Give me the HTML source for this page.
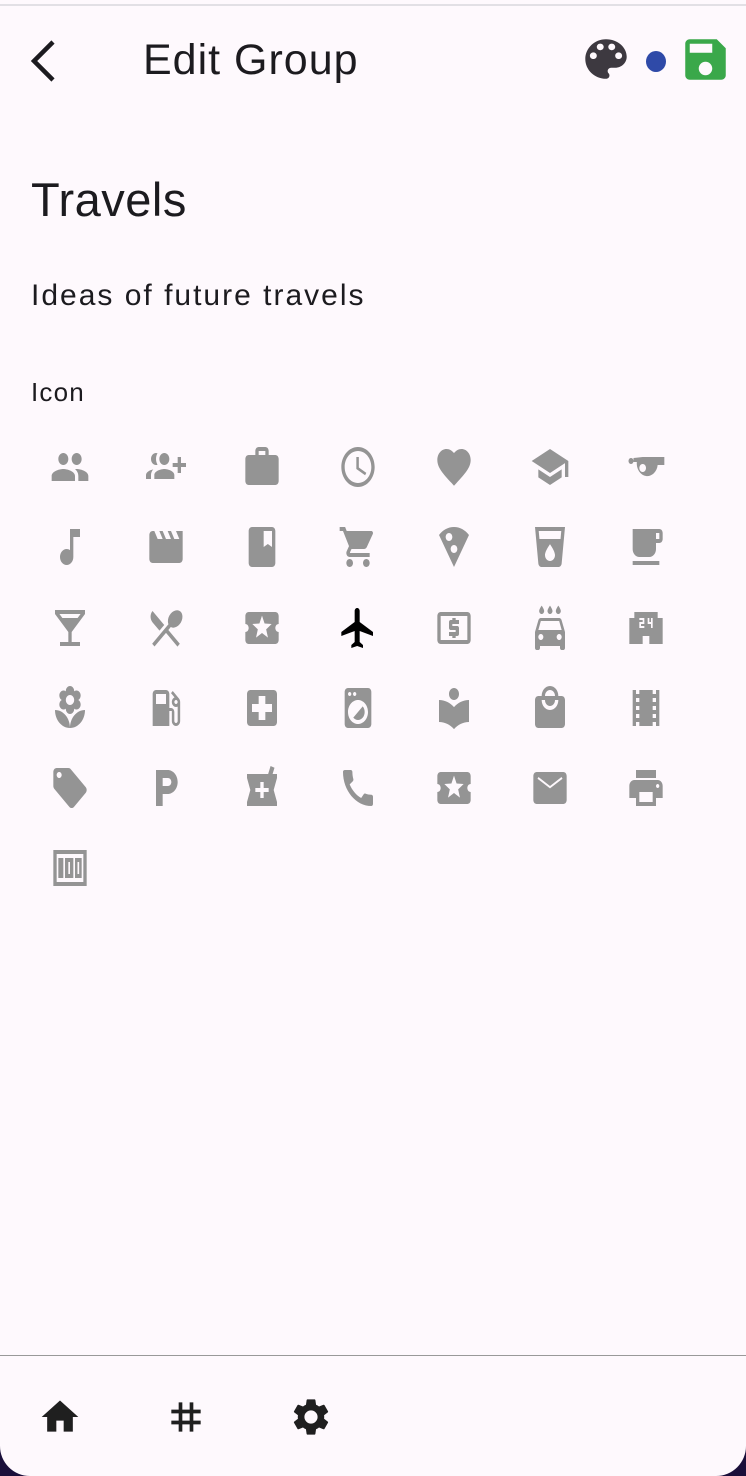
<!DOCTYPE html>
<html><head><meta charset="utf-8"><style>
*{margin:0;padding:0;box-sizing:border-box}
html,body{width:746px;height:1476px;background:#1a0f3a;overflow:hidden}
.scr{position:absolute;left:0;top:0;width:746px;height:1476px;background:#fef9fd;border-radius:0 0 30px 30px;overflow:hidden;font-family:"Liberation Sans",sans-serif;color:#1c1b1f}
.topline{position:absolute;left:0;top:4px;width:746px;height:2px;background:#e2e0e5}
.t{position:absolute;white-space:nowrap}
.g{position:absolute;width:40px;height:48px;fill:#949494}
.nav{position:absolute;fill:#1f1f1f}
</style></head><body><div class="scr">
<div class="topline"></div>
<svg style="position:absolute;left:26px;top:40px" width="34" height="42" viewBox="0 0 34 42"><path d="M27 2L8 21l19 19" fill="none" stroke="#1c1b1f" stroke-width="4.5"/></svg>
<div class="t" style="left:143px;top:36px;font-size:43px;letter-spacing:1px">Edit Group</div>
<svg style="position:absolute;left:583px;top:37px" width="46" height="44" viewBox="2 2 20 20" preserveAspectRatio="none"><path fill="#3d3940" d="M12 3c-4.97 0-9 4.03-9 9s4.03 9 9 9c.83 0 1.5-.67 1.5-1.5 0-.39-.15-.74-.39-1.01-.23-.26-.38-.61-.38-.99 0-.83.67-1.5 1.5-1.5H16c2.76 0 5-2.24 5-5 0-4.42-4.03-8-9-8zm-5.5 9c-.83 0-1.5-.67-1.5-1.5S5.670 9 6.5 9 8 9.67 8 10.5 7.33 12 6.5 12zm3-4C8.67 8 8 7.33 8 6.5S8.67 5 9.5 5s1.5.67 1.5 1.5S10.33 8 9.5 8zm5 0c-.83 0-1.5-.67-1.5-1.5S13.67 5 14.5 5s1.5.67 1.5 1.5S15.33 8 14.5 8zm3 4c-.83 0-1.5-.67-1.5-1.5S16.67 9 17.5 9s1.5.67 1.5 1.5-.67 1.5-1.5 1.5z"/></svg>
<div style="position:absolute;left:646px;top:51px;width:20px;height:21px;border-radius:50%;background:#2f4aa8"></div>
<svg style="position:absolute;left:683px;top:37px" width="45" height="45" viewBox="2 2 20 20"><path fill="#3aa84a" d="M17 3H5c-1.11 0-2 .9-2 2v14c0 1.1.89 2 2 2h14c1.1 0 2-.9 2-2V7l-4-4zm-5 16c-1.66 0-3-1.340-3-3s1.34-3 3-3 3 1.34 3 3-1.34 3-3 3zm3-10H5V5h10v4z"/></svg>

<div class="t" style="left:31px;top:172px;font-size:47px;letter-spacing:0.5px">Travels</div>
<div class="t" style="left:31px;top:279px;font-size:30px;letter-spacing:2px">Ideas of future travels</div>
<div class="t" style="left:31px;top:377px;font-size:26px;letter-spacing:1.2px">Icon</div>

<!-- row1 y=443 -->
<svg class="g" style="left:50px;top:443px" viewBox="0 0 24 24" preserveAspectRatio="none"><path d="M16 11c1.66 0 2.99-1.34 2.99-3S17.66 5 16 5c-1.66 0-3 1.34-3 3s1.34 3 3 3zm-8 0c1.66 0 2.99-1.34 2.99-3S9.66 5 8 5C6.34 5 5 6.34 5 8s1.34 3 3 3zm0 2c-2.33 0-7 1.17-7 3.5V19h14v-2.5c0-2.33-4.67-3.5-7-3.5zm8 0c-.29 0-.62.02-.97.05 1.16.84 1.97 1.970 1.97 3.45V19h6v-2.5c0-2.33-4.67-3.5-7-3.5z"/></svg>
<svg class="g" style="left:146px;top:443px" viewBox="0 0 24 24" preserveAspectRatio="none"><g transform="translate(24 0) scale(-1 1)"><path d="M8 10H5V7H3v3H0v2h3v3h2v-3h3v-2zm10 1c1.66 0 2.99-1.34 2.99-3S19.66 5 18 5c-.32 0-.63.05-.91.14.57.81.9 1.790.9 2.86s-.34 2.04-.9 2.86c.28.09.59.14.91.14zm-5 0c1.66 0 2.99-1.34 2.99-3S14.66 5 13 5c-1.66 0-3 1.34-3 3s1.34 3 3 3zm6.62 2.16c.83.73 1.38 1.66 1.38 2.84v2h3v-2c0-1.54-2.37-2.49-4.38-2.84zM13 13c-2 0-6 1-6 3v2h12v-2c0-2-4-3-6-3z"/></g></svg>
<svg class="g" style="left:242px;top:443px" viewBox="0 0 24 24" preserveAspectRatio="none"><path d="M20 6h-4V4c0-1.11-.89-2-2-2h-4c-1.11 0-2 .89-2 2v2H4c-1.11 0-1.99.89-1.99 2L2 19c0 1.11.89 2 2 2h16c1.11 0 2-.89 2-2V8c0-1.11-.89-2-2-2zm-6 0h-4V4h4v2z"/></svg>
<svg class="g" style="left:338px;top:443px" viewBox="0 0 24 24" preserveAspectRatio="none"><path d="M11.99 2C6.47 2 2 6.48 2 12s4.47 10 9.99 10C17.52 22 22 17.52 22 12S17.52 2 11.99 2zM12 20c-4.42 0-8-3.58-8-8s3.58-8 8-8 8 3.58 8 8-3.58 8-8 8zm.5-13H11v6l5.25 3.15.75-1.23-4.5-2.67z"/></svg>
<svg class="g" style="left:434px;top:443px" viewBox="0 0 24 24" preserveAspectRatio="none"><path d="M12 21.35l-1.45-1.32C5.4 15.36 2 12.28 2 8.5 2 5.42 4.42 3 7.5 3c1.74 0 3.41.81 4.5 2.09C13.09 3.81 14.76 3 16.5 3 19.58 3 22 5.42 22 8.5c0 3.78-3.4 6.86-8.55 11.54L12 21.35z"/></svg>
<svg class="g" style="left:530px;top:443px" viewBox="0 0 24 24" preserveAspectRatio="none"><path d="M5 13.18v4L12 21l7-3.82v-4L12 17l-7-3.82zM12 3L1 9l11 6 9-4.91V17h2V9L12 3z"/></svg>
<svg class="g" style="left:626px;top:443px" viewBox="0 0 24 24" preserveAspectRatio="none"><path fill-rule="evenodd" d="M3 7.5a1.5 1.5 0 1 0 0.01 0zM10 7h13v4h-4a6 6 0 1 1-12.5-1.5L4.5 9.5 4.5 7.5zM10 10.5a2 2 0 1 0 0.01 0z"/></svg>
<!-- row2 y=523 -->
<svg class="g" style="left:50px;top:523px" viewBox="0 0 24 24" preserveAspectRatio="none"><path d="M12 3v10.55c-.59-.34-1.27-.55-2-.55-2.21 0-4 1.79-4 4s1.79 4 4 4 4-1.79 4-4V7h4V3h-6z"/></svg>
<svg class="g" style="left:146px;top:523px" viewBox="0 0 24 24" preserveAspectRatio="none"><path d="M18 4l2 4h-3l-2-4h-2l2 4h-3l-2-4H8l2 4H7L5 4H4c-1.1 0-1.99.9-1.99 2L2 18c0 1.1.9 2 2 2h16c1.1 0 2-.9 2-2V4h-4z"/></svg>
<svg class="g" style="left:242px;top:523px" viewBox="0 0 24 24" preserveAspectRatio="none"><path d="M18 2H6c-1.1 0-2 .9-2 2v16c0 1.1.9 2 2 2h12c1.1 0 2-.9 2-2V4c0-1.1-.9-2-2-2zM6 4h5v8l-2.5-1.5L6 12V4z" transform="translate(24 0) scale(-1 1)"/></svg>
<svg class="g" style="left:338px;top:523px" viewBox="0 0 24 24" preserveAspectRatio="none"><path d="M7 18c-1.1 0-1.99.9-1.99 2S5.9 22 7 22s2-.9 2-2-.9-2-2-2zM1 2v2h2l3.6 7.59-1.35 2.45c-.16.28-.25.61-.25.96 0 1.1.9 2 2 2h12v-2H7.42c-.14 0-.25-.11-.25-.25l.03-.12.9-1.63h7.45c.75 0 1.41-.41 1.75-1.03l3.58-6.49c.08-.14.12-.31.12-.48 0-.55-.45-1-1-1H5.21l-.94-2H1zm16 16c-1.1 0-1.99.9-1.99 2s.89 2 1.99 2 2-.9 2-2-.9-2-2-2z"/></svg>
<svg class="g" style="left:434px;top:523px" viewBox="0 0 24 24" preserveAspectRatio="none"><path d="M12 2C8.43 2 5.23 3.54 3.01 6L12 22l8.99-16C18.78 3.55 15.57 2 12 2zM7 7c0-1.1.9-2 2-2s2 .9 2 2-.9 2-2 2-2-.9-2-2zm5 8c-1.1 0-2-.9-2-2s.9-2 2-2 2 .9 2 2-.9 2-2 2z"/></svg>
<svg class="g" style="left:530px;top:523px" viewBox="0 0 24 24" preserveAspectRatio="none"><path d="M3 2l2.01 18.23C5.13 21.23 5.97 22 7 22h10c1.03 0 1.87-.77 1.99-1.77L21 2H3zm9 17c-1.66 0-3-1.34-3-3 0-2 3-5.4 3-5.4s3 3.4 3 5.4c0 1.66-1.34 3-3 3zm6.33-11H5.67l-.44-4h13.53l-.43 4z"/></svg>
<svg class="g" style="left:626px;top:523px" viewBox="0 0 24 24" preserveAspectRatio="none"><path d="M20 3H4v10c0 2.21 1.79 4 4 4h6c2.21 0 4-1.79 4-4v-3h2c1.11 0 2-.89 2-2V5c0-1.11-.89-2-2-2zm0 5h-2V5h2v3zM4 19h16v2H4z"/></svg>
<!-- row3 y=604 -->
<svg class="g" style="left:50px;top:604px" viewBox="0 0 24 24" preserveAspectRatio="none"><path d="M21 5V3H3v2l8 9v5H6v2h12v-2h-5v-5l8-9zM7.43 7L5.66 5h12.69l-1.78 2H7.43z"/></svg>
<svg class="g" style="left:146px;top:604px" viewBox="0 0 24 24" preserveAspectRatio="none"><path d="M8.1 13.34l2.83-2.83L3.91 3.5c-1.56 1.56-1.56 4.09 0 5.66l4.19 4.18zm6.78-1.81c1.53.71 3.68.21 5.27-1.38 1.91-1.910 2.28-4.65.81-6.12-1.46-1.46-4.2-1.1-6.12.81-1.59 1.59-2.09 3.74-1.38 5.27L3.7 19.87l1.41 1.41L12 14.41l6.88 6.88 1.41-1.41L13.41 13l1.47-1.47z"/></svg>
<svg class="g" style="left:242px;top:604px" viewBox="0 0 24 24" preserveAspectRatio="none"><path d="M20 12c0-1.1.9-2 2-2V6c0-1.1-.9-2-2-2H4c-1.1 0-1.99.9-1.99 2v4c1.1 0 1.99.9 1.99 2s-.89 2-2 2v4c0 1.1.9 2 2 2h16c1.1 0 2-.9 2-2v-4c-1.1 0-2-.9-2-2zm-4.42 4.8L12 14.5l-3.58 2.3 1.08-4.12-3.29-2.69 4.24-.25L12 5.8l1.54 3.95 4.24.25-3.29 2.69 1.09 4.11z"/></svg>
<svg class="g" style="left:338px;top:604px;fill:#000" viewBox="0 0 24 24" preserveAspectRatio="none"><path d="M21 16v-2l-8-5V3.5c0-.83-.67-1.5-1.5-1.5S10 2.67 10 3.5V9l-8 5v2l8-2.5V19l-2 1.5V22l3.5-1 3.5 1v-1.5L13 19v-5.5l8 2.5z"/></svg>
<svg class="g" style="left:434px;top:604px" viewBox="0 0 24 24" preserveAspectRatio="none"><path d="M11 17h2v-1h1c.55 0 1-.45 1-1v-3c0-.55-.45-1-1-1h-3v-1h4V8h-2V7h-2v1h-1c-.55 0-1 .45-1 1v3c0 .55.45 1 1 1h3v1H9v2h2v1zm9-13H4c-1.11 0-1.99.89-1.99 2L2 18c0 1.11.89 2 2 2h16c1.11 0 2-.89 2-2V6c0-1.11-.89-2-2-2zm0 14H4V6h16v12z"/></svg>
<svg class="g" style="left:530px;top:604px" viewBox="0 0 24 24" preserveAspectRatio="none"><path d="M17 5c.83 0 1.5-.67 1.5-1.5 0-1-1.5-2.7-1.5-2.7s-1.5 1.7-1.5 2.7c0 .83.67 1.5 1.5 1.5zm-5 0c.83 0 1.5-.67 1.5-1.5 0-1-1.5-2.7-1.5-2.7s-1.5 1.7-1.5 2.7c0 .83.67 1.5 1.5 1.5zM7 5c.83 0 1.5-.67 1.5-1.5C8.5 2.5 7 .8 7 .8S5.5 2.5 5.5 3.5C5.5 4.33 6.17 5 7 5zm11.92 3.01C18.72 7.42 18.160 7 17.5 7h-11c-.66 0-1.21.42-1.42 1.01L3 14v8c0 .55.45 1 1 1h1c.55 0 1-.45 1-1v-1h12v1c0 .55.45 1 1 1h1c.55 0 1-.45 1-1v-8l-2.08-5.99zM6.5 18c-.83 0-1.5-.67-1.5-1.5S5.67 15 6.5 15s1.5.67 1.5 1.5S7.33 18 6.5 18zm11 0c-.83 0-1.5-.67-1.5-1.5s.67-1.5 1.5-1.5 1.5.67 1.5 1.5-.67 1.5-1.5 1.5zM5 13l1.5-4.5h11L19 13H5z"/></svg>
<svg class="g" style="left:626px;top:604px" viewBox="0 0 24 24" preserveAspectRatio="none"><path d="M19 7V4H5v3H2v13h8v-4h4v4h8V7h-3zm-8 3H9v1h2v1H8V9h2V8H8V7h3v3zm5 2h-1v-2h-2V7h1v2h1V7h1v5z"/></svg>
<!-- row4 y=684 -->
<svg class="g" style="left:50px;top:684px" viewBox="0 0 24 24" preserveAspectRatio="none"><path d="M12 22c4.97 0 9-4.03 9-9-4.97 0-9 4.03-9 9zM5.6 10.25c0 1.38 1.12 2.5 2.5 2.5.53 0 1.01-.16 1.42-.44l-.02.19c0 1.38 1.12 2.5 2.5 2.5s2.5-1.12 2.5-2.5l-.02-.19c.4.28.89.44 1.42.44 1.38 0 2.5-1.12 2.5-2.5 0-1-.59-1.85-1.43-2.25.84-.4 1.43-1.25 1.43-2.25 0-1.38-1.12-2.5-2.5-2.5-.53 0-1.01.16-1.42.44l.02-.19C14.5 2.12 13.38 1 12 1S9.5 2.12 9.5 3.5l.02.19c-.4-.28-.89-.44-1.42-.44-1.38 0-2.5 1.12-2.5 2.5 0 1 .59 1.85 1.43 2.25-.84.4-1.43 1.25-1.43 2.25zM12 5.5c1.38 0 2.5 1.12 2.5 2.5s-1.12 2.5-2.5 2.5S9.5 9.38 9.5 8s1.12-2.5 2.5-2.5zM3 13c0 4.97 4.03 9 9 9 0-4.97-4.03-9-9-9z"/></svg>
<svg class="g" style="left:146px;top:684px" viewBox="0 0 24 24" preserveAspectRatio="none"><path d="M19.77 7.23l.01-.01-3.72-3.72L15 4.56l2.11 2.11c-.94.36-1.61 1.26-1.61 2.33 0 1.38 1.12 2.5 2.5 2.5.36 0 .69-.08 1-.21v7.21c0 .55-.45 1-1 1s-1-.45-1-1V14c0-1.1-.9-2-2-2h-1V5c0-1.1-.9-2-2-2H6c-1.1 0-2 .9-2 2v16h10v-7.5h1.5v5c0 1.38 1.12 2.5 2.5 2.5s2.5-1.12 2.5-2.5V9c0-.69-.28-1.32-.73-1.77zM12 10H6V5h6v5zm6 0c-.55 0-1-.45-1-1s.45-1 1-1 1 .45 1 1-.45 1-1 1z"/></svg>
<svg class="g" style="left:242px;top:684px" viewBox="0 0 24 24" preserveAspectRatio="none"><path d="M19 3H5c-1.1 0-1.99.9-1.99 2L3 19c0 1.1.9 2 2 2h14c1.1 0 2-.9 2-2V5c0-1.1-.9-2-2-2zm-1 11h-4v4h-4v-4H6v-4h4V6h4v4h4v4z"/></svg>
<svg class="g" style="left:338px;top:684px" viewBox="0 0 24 24" preserveAspectRatio="none"><path d="M9.17 16.83c1.56 1.56 4.1 1.56 5.66 0 1.56-1.56 1.56-4.1 0-5.66l-5.66 5.66zM18 2.01L6 2c-1.11 0-2 .89-2 2v16c0 1.11.89 2 2 2h12c1.11 0 2-.89 2-2V4c0-1.11-.89-1.99-2-1.99zM10 4c.55 0 1 .45 1 1s-.45 1-1 1-1-.45-1-1 .45-1 1-1zM7 4c.55 0 1 .45 1 1s-.45 1-1 1-1-.45-1-1 .45-1 1-1zm5 16c-3.31 0-6-2.69-6-6s2.69-6 6-6 6 2.69 6 6-2.69 6-6 6z"/></svg>
<svg class="g" style="left:434px;top:684px" viewBox="0 0 24 24" preserveAspectRatio="none"><path d="M12 11.55C9.64 9.35 6.48 8 3 8v11c3.48 0 6.64 1.35 9 3.55 2.36-2.19 5.52-3.55 9-3.55V8c-3.48 0-6.64 1.35-9 3.55zM12 8c1.66 0 3-1.34 3-3s-1.34-3-3-3-3 1.34-3 3 1.34 3 3 3z"/></svg>
<svg class="g" style="left:530px;top:684px" viewBox="0 0 24 24" preserveAspectRatio="none"><path d="M19 6h-2c0-2.76-2.24-5-5-5S7 3.24 7 6H5c-1.1 0-1.99.9-1.99 2L3 20c0 1.1.9 2 2 2h14c1.1 0 2-.9 2-2V8c0-1.1-.9-2-2-2zm-7-3c1.66 0 3 1.34 3 3H9c0-1.66 1.34-3 3-3zm0 10c-2.76 0-5-2.24-5-5h2c0 1.66 1.34 3 3 3s3-1.34 3-3h2c0 2.76-2.24 5-5 5z"/></svg>
<svg class="g" style="left:626px;top:684px" viewBox="0 0 24 24" preserveAspectRatio="none"><path d="M18 3v2h-2V3H8v2H6V3H4v18h2v-2h2v2h8v-2h2v2h2V3h-2zM8 17H6v-2h2v2zm0-4H6v-2h2v2zm0-4H6V7h2v2zm10 8h-2v-2h2v2zm0-4h-2v-2h2v2zm0-4h-2V7h2v2z"/></svg>
<!-- row5 y=764 -->
<svg class="g" style="left:50px;top:764px" viewBox="0 0 24 24" preserveAspectRatio="none"><path d="M21.41 11.58l-9-9C12.05 2.22 11.55 2 11 2H4c-1.1 0-2 .9-2 2v7c0 .55.22 1.05.59 1.42l9 9c.36.36.86.58 1.41.58.55 0 1.05-.22 1.41-.59l7-7c.37-.36.59-.86.59-1.41 0-.55-.23-1.06-.59-1.420zM5.5 7C4.67 7 4 6.33 4 5.5S4.67 4 5.5 4 7 4.67 7 5.5 6.33 7 5.5 7z"/></svg>
<svg class="g" style="left:146px;top:764px" viewBox="0 0 24 24" preserveAspectRatio="none"><path d="M13 3H6v18h4v-6h3c3.31 0 6-2.69 6-6s-2.69-6-6-6zm.2 8H10V7h3.2c1.1 0 2 .9 2 2s-.9 2-2 2z"/></svg>
<svg class="g" style="left:242px;top:764px" viewBox="0 0 24 24" preserveAspectRatio="none"><path d="M21 5h-2.64l1.14-3.14L17.15 1l-1.46 4H3v2l2 6-2 6v2h18v-2l-2-6 2-6V5zm-5 9h-3v3h-2v-3H8v-2h3V9h2v3h3v2z"/></svg>
<svg class="g" style="left:338px;top:764px" viewBox="0 0 24 24" preserveAspectRatio="none"><path d="M20.01 15.38c-1.23 0-2.42-.2-3.53-.56-.35-.12-.74-.03-1.01.24l-1.57 1.97c-2.83-1.35-5.48-3.9-6.89-6.83l1.95-1.66c.27-.28.35-.67.24-1.02-.37-1.11-.56-2.3-.56-3.53 0-.54-.45-.99-.99-.99H4.19C3.65 3 3 3.24 3 3.99 3 13.28 10.73 21 20.01 21c.71 0 .99-.63.99-1.18v-3.45c0-.54-.45-.99-.99-.99z"/></svg>
<svg class="g" style="left:434px;top:764px" viewBox="0 0 24 24" preserveAspectRatio="none"><path d="M20 12c0-1.1.9-2 2-2V6c0-1.1-.9-2-2-2H4c-1.1 0-1.99.9-1.99 2v4c1.1 0 1.99.9 1.99 2s-.89 2-2 2v4c0 1.1.9 2 2 2h16c1.1 0 2-.9 2-2v-4c-1.1 0-2-.9-2-2zm-4.42 4.8L12 14.5l-3.58 2.3 1.08-4.12-3.29-2.69 4.24-.25L12 5.8l1.54 3.95 4.24.25-3.29 2.69 1.09 4.11z"/></svg>
<svg class="g" style="left:530px;top:764px" viewBox="0 0 24 24" preserveAspectRatio="none"><path d="M20 4H4c-1.1 0-1.99.9-1.99 2L2 18c0 1.1.9 2 2 2h16c1.1 0 2-.9 2-2V6c0-1.1-.9-2-2-2zM12 12.2L4.5 7.4l.6-.9L12 11l6.9-4.5.6.9z"/></svg>
<svg class="g" style="left:626px;top:764px" viewBox="0 0 24 24" preserveAspectRatio="none"><path d="M19 8H5c-1.66 0-3 1.34-3 3v6h4v4h12v-4h4v-6c0-1.66-1.34-3-3-3zm-3 11H8v-5h8v5zm3-7c-.55 0-1-.45-1-1s.45-1 1-1 1 .45 1 1-.45 1-1 1zm-1-9H6v4h12V3z"/></svg>
<!-- row6 -->
<svg class="g" style="left:50px;top:844px" viewBox="0 0 24 24" preserveAspectRatio="none"><path fill-rule="evenodd" d="M2 3h20v18H2zM4 5v14h16V5zM5 7h3v10H5zM9 7h5v10H9zM11 9v6h1V9zM15 7h4v10h-4zM16.5 9v6h1V9z"/></svg>

<div style="position:absolute;left:0;top:1355px;width:746px;height:1px;background:#999"></div>
<svg class="nav" style="left:38px;top:1395px" width="44" height="44" viewBox="0 0 24 24"><path d="M10 20v-6h4v6h5v-8h3L12 3 2 12h3v8z"/></svg>
<svg class="nav" style="left:164px;top:1395px" width="44" height="44" viewBox="0 0 24 24"><path d="M20 10V8h-4V4h-2v4h-4V4H8v4H4v2h4v4H4v2h4v4h2v-4h4v4h2v-4h4v-2h-4v-4h4zm-6 4h-4v-4h4v4z"/></svg>
<svg class="nav" style="left:289px;top:1395px" width="44" height="44" viewBox="0 0 24 24"><path d="M19.14 12.94c.04-.3.06-.61.06-.94 0-.32-.02-.64-.07-.94l2.03-1.58c.18-.14.23-.41.12-.61l-1.92-3.32c-.12-.22-.37-.29-.59-.22l-2.39.96c-.5-.38-1.03-.7-1.62-.94l-.36-2.54c-.04-.24-.24-.41-.48-.41h-3.84c-.24 0-.43.17-.47.41l-.36 2.54c-.59.24-1.13.57-1.62.94l-2.39-.96c-.22-.08-.47 0-.59.22L2.74 8.870c-.12.21-.08.47.12.61l2.03 1.58c-.05.3-.09.63-.09.94s.02.64.07.94l-2.03 1.58c-.18.14-.23.41-.12.61l1.92 3.32c.12.22.37.29.59.22l2.39-.96c.5.38 1.03.7 1.62.94l.36 2.54c.05.24.24.41.48.41h3.84c.24 0 .44-.17.47-.41l.36-2.54c.59-.24 1.13-.56 1.62-.94l2.39.96c.22.08.47 0 .59-.22l1.92-3.32c.12-.22.07-.47-.12-.61l-2.01-1.58zM12 15.6c-1.98 0-3.6-1.62-3.6-3.6s1.62-3.6 3.6-3.6 3.6 1.62 3.6 3.6-1.62 3.6-3.6 3.6z"/></svg>
</div></body></html>
